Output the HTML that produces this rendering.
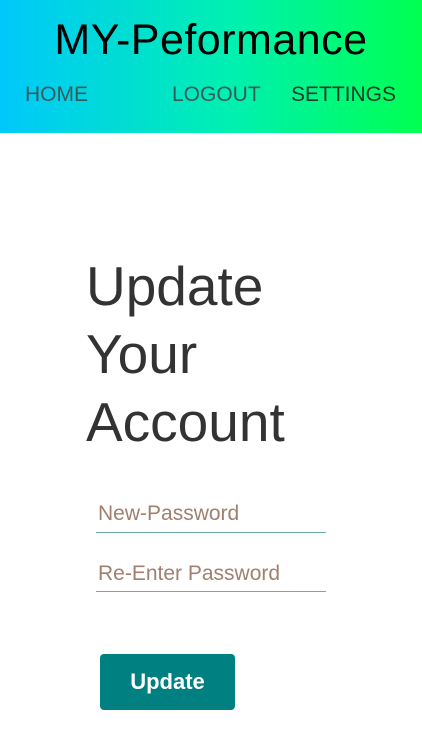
<!DOCTYPE html>
<html><head><style>
body{margin:0;width:422px;height:750px;background:#fff;font-family:"Liberation Sans",sans-serif;position:relative;overflow:hidden}
.hdr{position:absolute;left:0;top:0;width:422px;height:133px;background:linear-gradient(90deg,#00c8fc,#00f0b0 55%,#00ff50)}
.t{position:absolute;left:0;width:422px;top:16px;text-align:center;font-size:43px;color:#000;letter-spacing:0.5px}
.n{position:absolute;top:83px;font-size:21px;color:#3a5a5a;font-weight:normal}
h1{position:absolute;left:86px;top:252px;margin:0;font-weight:normal;font-size:55px;line-height:68px;color:#333}
.in{position:absolute;left:96px;width:230px;border-bottom:1px solid #6aaeb0;font-size:21px;color:#a08070;padding-left:2px;box-sizing:border-box}
.btn{position:absolute;left:100px;top:654px;width:135px;height:56px;background:#008080;border-radius:4px;color:#fff;font-size:22px;font-weight:bold;text-align:center;line-height:56px}
</style></head><body>
<div class="hdr">
<div class="t">MY-Peformance</div>
<div class="n" style="left:25px">HOME</div>
<div class="n" style="left:172px">LOGOUT</div>
<div class="n" style="left:291px;color:#1a3a2a">SETTINGS</div>
</div>
<h1>Update<br>Your<br>Account</h1>
<div class="in" style="top:502px;height:31px">New-Password</div>
<div class="in" style="top:562px;height:30px">Re-Enter Password</div>
<div class="btn">Update</div>
</body></html>
